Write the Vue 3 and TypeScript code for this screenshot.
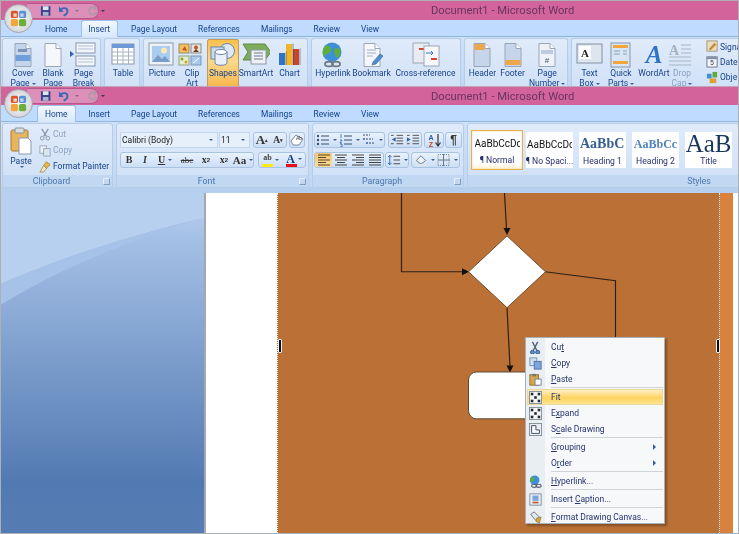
<script setup lang="ts">
interface Big { label: string; second?: string; caret?: boolean; w: number; icon: string; hot?: boolean; dim?: boolean }
interface Group { w: number; pad: number; buttons: Big[] }

const page = (fill: string, extra = '') =>
  `<path d="M6 1.5h11l5 5v18H6z" fill="${fill}" stroke="#9aa6b8"/><path d="M17 1.5v5h5" fill="#fff" stroke="#9aa6b8"/>${extra}`

const icons: Record<string, string> = {
  cover: page('#c3d5ec', '<rect x="9" y="7" width="9" height="3" fill="#7d93b5"/><rect x="6.5" y="13" width="15" height="6" fill="#6f9fd8"/>'),
  blank: page('#f5f7fb'),
  pagebreak: '<rect x="6" y="1" width="19" height="10" fill="#f3f6fb" stroke="#8796ad"/><path d="M8 4h15M8 7h15" stroke="#b4c0d2"/><rect x="6" y="14" width="19" height="10" fill="#f3f6fb" stroke="#8796ad"/><path d="M8 17h15M8 20h15" stroke="#b4c0d2"/><path d="M0 9l4 3-4 3z" fill="#2f5fb0"/>',
  table: '<rect x="3" y="2" width="22" height="20" fill="#fff" stroke="#8a98ac"/><rect x="3" y="2" width="22" height="4" fill="#6b9ad6"/><path d="M3 10h22M3 14h22M3 18h22M8.500 6v16M14 6v16M19.500 6v16" stroke="#a9b5c6"/>',
  picture: '<rect x="1" y="1" width="24" height="22" fill="#eef2f7" stroke="#8d98a8"/><rect x="4" y="4" width="18" height="16" fill="#a9cdf2"/><circle cx="16" cy="8.500" r="3" fill="#ffe9a8"/><path d="M4 20l6-7 4 4 3-3 5 6z" fill="#7a9cc6"/>',
  clipart: '<rect x="1" y="2" width="10" height="9" fill="#f3c05a" stroke="#9a8a70"/><path d="M4 8l3-4 2 5z" fill="#c85a20"/><rect x="13" y="2" width="10" height="9" fill="#e8e3da" stroke="#8a8a8a"/><circle cx="18" cy="5.500" r="2" fill="#b85a2a"/><path d="M15 10l3-3 3 3z" fill="#6a3a2a"/><rect x="1" y="14" width="10" height="9" fill="#e7edc8" stroke="#8fa08a"/><circle cx="4" cy="17" r="1.500" fill="#86a83a"/><circle cx="8" cy="20" r="1.500" fill="#d2a520"/><rect x="13" y="14" width="10" height="9" fill="#a8caec" stroke="#7c98b8"/><path d="M15 21l6-5" stroke="#fff"/>',
  shapes: '<circle cx="18" cy="9" r="7.500" fill="#dce8f6" stroke="#6d84a4"/><rect x="2" y="5" width="13" height="12" fill="#c9daef" stroke="#6d84a4"/><path d="M6 10v11c0 3 12 3 12 0V10z" fill="#e8f0fa" stroke="#6d84a4"/><ellipse cx="12" cy="10" rx="6" ry="2.500" fill="#fff" stroke="#6d84a4"/>',
  smartart: '<path d="M1 2h22l6 8-6 8H1l5-8z" fill="#7dac5c" stroke="#5e8a44"/><rect x="9" y="8" width="15" height="14" fill="#eef2f6" stroke="#8b97a6"/><path d="M12 11h9M12 14h9M12 17h9" stroke="#6c7a8c"/>',
  chart: '<rect x="3" y="11" width="6" height="12" fill="#2f74c0"/><rect x="10" y="2" width="6" height="21" fill="#f0b429"/><rect x="17" y="7" width="6" height="16" fill="#c8442a"/><path d="M9 11l2-2v14H9zM16 2l2-1v22h-2zM23 7l2-1v17h-2z" fill="#00000033"/>',
  hyperlink: '<circle cx="13" cy="10" r="9.500" fill="#3d8fd8"/><path d="M7 3c4 1 6 3 5 6s-6 2-7 6c-2-3-2-8 2-12zM16 6l5 1c1 5-1 8-3 9-2-3-4-6-2-10z" fill="#5fae3c"/><g fill="none" stroke="#6d7784" stroke-width="1.800"><ellipse cx="10" cy="22" rx="4" ry="2.400"/><ellipse cx="17" cy="22" rx="4" ry="2.400"/></g>',
  bookmark: page('#f5f7fb', '<path d="M9 8h9M9 11h9M9 14h6" stroke="#9cb0c8"/><path d="M15 20l7-8 3 2-7 8-4 1z" fill="#4d8fd0" stroke="#2f5f9a" stroke-width=".6"/>'),
  crossref: '<rect x="1" y="1" width="16" height="20" fill="#e9edf3" stroke="#9aa6b8"/><rect x="7" y="6" width="6" height="2" fill="#d8452a"/><rect x="12" y="4" width="15" height="20" fill="#f6f8fb" stroke="#9aa6b8"/><rect x="19" y="16" width="6" height="2" fill="#d8452a"/><path d="M14 11h7l-2-2m2 2-2 2" fill="none" stroke="#2f74c0"/>',
  header: page('#c6d5e9', '<rect x="6.500" y="2" width="10" height="6" fill="#eda64a"/>'),
  footer: page('#c6d5e9', '<rect x="6.500" y="18" width="15" height="5" fill="#eda64a"/>'),
  pagenum: page('#eef2f8', '<rect x="8" y="8" width="12" height="4" fill="#bccbe0"/><text x="14" y="21" font-size="8" text-anchor="middle" fill="#45536a" font-family="Liberation Sans">#</text>'),
  textbox: '<rect x="1" y="2" width="25" height="19" fill="#dde5ef" stroke="#8390a2"/><rect x="3" y="4" width="12" height="13" fill="#fff"/><text x="9" y="15" font-size="11" font-weight="700" text-anchor="middle" fill="#222" font-family="Liberation Serif">A</text>',
  quick: '<rect x="4" y="1" width="19" height="24" fill="#d8e5f5" stroke="#8595ab"/><rect x="6" y="3" width="15" height="3" fill="#f2a53a"/><path d="M7 9h6M7 12h6M16 9h4M16 12h4" stroke="#8aa0bc"/><rect x="6" y="19" width="15" height="3" fill="#f2a53a"/>',
  wordart: '<text x="14" y="21" font-size="25" font-style="italic" font-weight="700" text-anchor="middle" fill="#2e73c4" font-family="Liberation Serif">A</text>',
  dropcap: '<text x="6" y="13" font-size="14" font-weight="700" text-anchor="middle" fill="#a8b0bc" font-family="Liberation Serif">A</text><path d="M13 3h10M13 7h10M13 11h10M1 15h22M1 19h22M1 23h22" stroke="#a8b4c4"/>',
  save: '<rect x="1" y="1" width="10" height="10" fill="#3b3f8c"/><rect x="3" y="1" width="6" height="4" fill="#dfe6f3"/><rect x="3" y="7" width="6" height="4" fill="#a9b5d0"/>',
  undo: '<path d="M2 6c2-4 8-4 8 0s-3 4-4 5" fill="none" stroke="#3d68b5" stroke-width="2"/><path d="M1 1v6h5z" fill="#3d68b5"/>',
  redo: '<path d="M9 3a4 4 0 1 0 1 4" fill="none" stroke="#b098a8" stroke-width="2"/><path d="M10 0v5H6z" fill="#b098a8"/>',
  cut: '<path d="M3 1l5 8M10 1L5 9" stroke="#8a96a6" stroke-width="1.300"/><circle cx="3.500" cy="11" r="2" fill="none" stroke="#8a96a6"/><circle cx="9.500" cy="11" r="2" fill="none" stroke="#8a96a6"/>',
  copy: '<rect x="1" y="2" width="7" height="8" fill="#eef3f9" stroke="#97a6ba"/><rect x="5" y="5" width="7" height="8" fill="#dbe6f3" stroke="#97a6ba"/>',
  painter: '<path d="M8 2l4 3-4 4-3-3z" fill="#e8b640" stroke="#8f7330" stroke-width=".7"/><path d="M5 6l3 3-3 4-4 0z" fill="#f5e7bf" stroke="#8f7330" stroke-width=".7"/>',
  paste: '<rect x="1" y="3" width="17" height="21" rx="1.500" fill="#e8b45c" stroke="#a47b35"/><rect x="5" y="1" width="9" height="5" rx="1" fill="#d8dde4" stroke="#88929e"/><path d="M9 11h9l3 3v13H9z" fill="#fff" stroke="#8e9aaa"/>',
  list: '<g fill="#38506e"><circle cx="2" cy="3" r="1.200"/><circle cx="2" cy="7" r="1.200"/><circle cx="2" cy="11" r="1.200"/></g><path d="M5 3h8M5 7h8M5 11h8" stroke="#38506e"/>',
  numlist: '<path d="M2 1v4M1 7h2l-2 3h2M1 11h2v3H1" stroke="#2f62ad" fill="none" stroke-width=".8"/><path d="M5 3h8M5 7h8M5 11h8" stroke="#38506e"/>',
  multilist: '<path d="M1 2h7M4 6h7M7 10h6" stroke="#38506e" stroke-dasharray="2 1"/><circle cx="2" cy="6" r="1" fill="#2f62ad"/><circle cx="5" cy="10" r="1" fill="#2f62ad"/>',
  outdent: '<path d="M7 2h7M7 5h7M7 8h7M7 11h7M1 2h3M1 11h3" stroke="#4a4a4a"/><path d="M6 4v5L2 6.500z" fill="#355f9e"/>',
  indent: '<path d="M7 2h7M7 5h7M7 8h7M7 11h7M1 2h3M1 11h3" stroke="#4a4a4a"/><path d="M1 4v5l4-2.500z" fill="#355f9e"/>',
  sort: '<text x="4" y="7" font-size="7" font-weight="700" text-anchor="middle" fill="#355f9e" font-family="Liberation Sans">A</text><text x="4" y="14" font-size="7" font-weight="700" text-anchor="middle" fill="#c8442a" font-family="Liberation Sans">Z</text><path d="M11 1v11M8.500 9.500L11 13l2.500-3.500" fill="none" stroke="#333" stroke-width="1.200"/>',
  alignl: '<path d="M1 2h12M1 4.500h8M1 7h12M1 9.500h8M1 12h12" stroke="#5c4526" stroke-width="1.200"/>',
  alignc: '<path d="M1 2h12M3 4.500h8M1 7h12M3 9.500h8M1 12h12" stroke="#444" stroke-width="1.200"/>',
  alignr: '<path d="M1 2h12M5 4.500h8M1 7h12M5 9.500h8M1 12h12" stroke="#444" stroke-width="1.200"/>',
  alignj: '<path d="M1 2h12M1 4.500h12M1 7h12M1 9.500h12M1 12h12" stroke="#444" stroke-width="1.200"/>',
  spacing: '<path d="M3 2v10M1 4l2-2 2 2M1 10l2 2 2-2" fill="none" stroke="#2f62ad"/><path d="M7 3h7M7 7h7M7 11h7" stroke="#444"/>',
  shade: '<path d="M2 8l5-5 5 5-5 4z" fill="#eef2f7" stroke="#6a7686"/><rect x="1" y="12" width="12" height="2" fill="#dfe6ef"/>',
  borders: '<rect x="1" y="1.500" width="11" height="11" fill="none" stroke="#7a8796" stroke-dasharray="1 1"/><path d="M6.500 1v12M1 7h12" stroke="#6e7a8a"/>',
  clear: '<path d="M1 8l5-6 7 4-4 6-6 0z" fill="#fff" stroke="#7f8b9a"/><text x="6" y="7" font-size="5" fill="#333" font-family="Liberation Sans">Ab</text>',
  signature: '<rect x="1" y="1" width="11" height="11" fill="#e8dcc2" stroke="#a49474"/><path d="M3 10l6-7 2 2-6 6z" fill="#c58a32"/>',
  date: '<rect x="1" y="2" width="11" height="11" fill="#f2f5f9" stroke="#6c7888"/><text x="6.500" y="11" font-size="7" text-anchor="middle" fill="#334" font-family="Liberation Sans">5</text><rect x="1" y="2" width="11" height="2.500" fill="#7f93ad"/>',
  object: '<rect x="1" y="3" width="5" height="5" fill="#3f8fd0"/><rect x="7" y="1" width="5" height="6" fill="#5fa844"/><rect x="4" y="8" width="7" height="5" fill="#e0a030"/>',
  mcut: '<path d="M4 1l5 10M10 1L5 11" stroke="#4a5e7a" stroke-width="1.500"/><circle cx="4" cy="13" r="2.300" fill="#5a8fd0" stroke="#2e4f80"/><circle cx="10" cy="13" r="2.300" fill="#5a8fd0" stroke="#2e4f80"/>',
  mcopy: '<rect x="1" y="1" width="8" height="9" fill="#cfe0f5" stroke="#6f8bb0"/><rect x="6" y="5" width="8" height="9" fill="#7ba6dc" stroke="#4d6f9f"/>',
  mpaste: '<rect x="1" y="2" width="10" height="12" fill="#d8a84c" stroke="#8a6a2a"/><rect x="4" y="1" width="4" height="3" fill="#777"/><rect x="7" y="7" width="7" height="7" fill="#fff" stroke="#6f7b8b"/>',
  mfit: '<rect x=".500" y=".500" width="14" height="14" fill="#f3f5f8" stroke="#7b8797"/><g fill="#262b33"><rect x="2" y="2" width="3" height="3"/><rect x="10" y="2" width="3" height="3"/><rect x="2" y="10" width="3" height="3"/><rect x="10" y="10" width="3" height="3"/><rect x="6" y="6" width="3" height="3"/></g>',
  mscale: '<rect x=".500" y=".500" width="14" height="14" fill="#e8edf4" stroke="#7b8797"/><path d="M3 11V3h5v5h4v4H3z" fill="#f9fbfd" stroke="#2e3a4c"/>',
  mhyper: '<circle cx="6.500" cy="6" r="5.500" fill="#3d8fd8"/><path d="M3 2c3 1 4 3 2 5L2 8C1 6 1 4 3 2z" fill="#5fae3c"/><g fill="none" stroke="#59636f" stroke-width="1.300"><ellipse cx="6" cy="12.500" rx="3" ry="1.800"/><ellipse cx="11" cy="12.500" rx="3" ry="1.800"/></g>',
  mcaption: '<rect x="1" y="1" width="13" height="13" fill="#e9eef5" stroke="#7b8797"/><rect x="4" y="3" width="7" height="6" fill="#7ba6dc"/><rect x="4" y="10" width="7" height="2" fill="#c0603a"/>',
  mformat: '<path d="M2 4l4-3 6 6-4 4z" fill="#dfe6ef" stroke="#5e6c80"/><path d="M9 8l5-1-2 7-4-2z" fill="#d9a733" stroke="#7f6420" stroke-width=".6"/>',
}

const ribbons = [{ cls: 'first', active: 'Insert' }, { cls: 'second', active: 'Home' }]
const tabs = ['Home', 'Insert', 'Page Layout', 'References', 'Mailings', 'Review', 'View']

const insertGroups: Group[] = [
  { w: 99, pad: 5, buttons: [
    { label: 'Cover', second: 'Page', caret: true, w: 30, icon: 'cover' },
    { label: 'Blank', second: 'Page', w: 30, icon: 'blank' },
    { label: 'Page', second: 'Break', w: 31, icon: 'pagebreak' },
  ] },
  { w: 36, pad: 2, buttons: [{ label: 'Table', caret: true, w: 32, icon: 'table' }] },
  { w: 165, pad: 3, buttons: [
    { label: 'Picture', w: 30, icon: 'picture' },
    { label: 'Clip', second: 'Art', w: 30, icon: 'clipart' },
    { label: 'Shapes', caret: true, w: 32, icon: 'shapes', hot: true },
    { label: 'SmartArt', w: 34, icon: 'smartart' },
    { label: 'Chart', w: 33, icon: 'chart' },
  ] },
  { w: 150, pad: 2, buttons: [
    { label: 'Hyperlink', w: 38, icon: 'hyperlink' },
    { label: 'Bookmark', w: 39, icon: 'bookmark' },
    { label: 'Cross-reference', w: 69, icon: 'crossref' },
  ] },
  { w: 104, pad: 2, buttons: [
    { label: 'Header', caret: true, w: 31, icon: 'header' },
    { label: 'Footer', caret: true, w: 30, icon: 'footer' },
    { label: 'Page', second: 'Number', caret: true, w: 40, icon: 'pagenum' },
  ] },
]
const textButtons: Big[] = [
  { label: 'Text', second: 'Box', caret: true, w: 31, icon: 'textbox' },
  { label: 'Quick', second: 'Parts', caret: true, w: 32, icon: 'quick' },
  { label: 'WordArt', caret: true, w: 34, icon: 'wordart' },
  { label: 'Drop', second: 'Cap', caret: true, w: 22, icon: 'dropcap', dim: true },
]
const textSmall = [
  { label: 'Signa', icon: 'signature' },
  { label: 'Date', icon: 'date' },
  { label: 'Obje', icon: 'object' },
]
const clipboardSmall = [
  { label: 'Cut', icon: 'cut', off: true },
  { label: 'Copy', icon: 'copy', off: true },
  { label: 'Format Painter', icon: 'painter', off: false },
]
const fontSeg = [
  { t: 'B', c: 'g-b', w: 16 }, { t: 'I', c: 'g-i', w: 16 }, { t: 'U', c: 'g-u', w: 24, caret: true },
  { t: 'abc', c: 'g-s', w: 20 }, { t: 'x', sub: '2', c: 'g-x', w: 18 }, { t: 'x', sup: '2', c: 'g-x', w: 18 },
  { t: 'Aa', c: 'g-a', w: 20, caret: true },
]
const styles = [
  { sample: 'AaBbCcDc', label: '¶ Normal', cls: 's-normal', on: true },
  { sample: 'AaBbCcDc', label: '¶ No Spaci...', cls: 's-normal', on: false },
  { sample: 'AaBbC', label: 'Heading 1', cls: 's-h1', on: false },
  { sample: 'AaBbCc', label: 'Heading 2', cls: 's-h2', on: false },
  { sample: 'AaB', label: 'Title', cls: 's-title', on: false },
]
const menu = [
  { pre: 'Cu', u: 't', post: '', icon: 'mcut' },
  { pre: '', u: 'C', post: 'opy', icon: 'mcopy' },
  { pre: '', u: 'P', post: 'aste', icon: 'mpaste', sep: true },
  { pre: 'Fit', u: '', post: '', icon: 'mfit', hot: true },
  { pre: 'E', u: 'x', post: 'pand', icon: 'mfit' },
  { pre: 'S', u: 'c', post: 'ale Drawing', icon: 'mscale', sep: true },
  { pre: '', u: 'G', post: 'rouping', sub: true },
  { pre: 'O', u: 'r', post: 'der', sub: true, sep: true },
  { pre: '', u: 'H', post: 'yperlink...', icon: 'mhyper', sep: true },
  { pre: 'Insert ', u: 'C', post: 'aption...', icon: 'mcaption', sep: true },
  { pre: '', u: 'F', post: 'ormat Drawing Canvas...', icon: 'mformat' },
]
</script>

<template>
  <div class="app">
    <header v-for="r in ribbons" :key="r.cls" class="ribbon" :class="r.cls">
      <div class="titlebar">
        <div class="qat-zone">
          <div class="qat">
            <svg class="qi" viewBox="0 0 12 12" v-html="icons.save"></svg>
            <svg class="qi undo" viewBox="0 0 12 12" v-html="icons.undo"></svg>
            <i class="caret qc"></i>
            <svg class="qi" viewBox="0 0 12 12" v-html="icons.redo"></svg>
          </div>
          <i class="caret qmore"></i>
        </div>
        <div class="doc-title">Document1 - Microsoft Word</div>
      </div>
      <nav class="tabs">
        <span v-for="t in tabs" :key="t" class="tab" :class="{ active: t === r.active }">{{ t }}</span>
      </nav>
      <div class="orb">
        <svg viewBox="0 0 20 20">
          <rect x="1" y="1" width="8.500" height="8.500" rx="2" fill="#d9552c"/>
          <rect x="10.500" y="1" width="8.500" height="8.500" rx="2" fill="#5b8fd6"/>
          <rect x="1" y="10.500" width="8.500" height="8.500" rx="2" fill="#efa63a"/>
          <rect x="10.500" y="10.500" width="8.500" height="8.500" rx="2" fill="#6cae3e"/>
          <rect x="4" y="4" width="4" height="4" fill="#fff" opacity=".7"/>
          <rect x="12" y="4" width="4" height="4" fill="#fff" opacity=".6"/>
        </svg>
      </div>

      <div v-if="r.cls === 'first'" class="body body-insert">
        <section v-for="(g, i) in insertGroups" :key="i" class="group short" :style="{ width: g.w + 'px', paddingLeft: g.pad + 'px' }">
          <button v-for="b in g.buttons" :key="b.label" class="big" :class="{ hot: b.hot, dim: b.dim }" :style="{ width: b.w + 'px' }">
            <svg class="big-icon" viewBox="0 0 28 26" v-html="icons[b.icon]"></svg>
            <span class="big-l">{{ b.label }}</span>
            <span class="big-l">{{ b.second }}<i v-if="b.caret && b.second" class="caret"></i></span>
            <i v-if="b.caret && !b.second" class="caret lone"></i>
          </button>
        </section>
        <section class="group short grow">
          <button v-for="b in textButtons" :key="b.label" class="big" :class="{ dim: b.dim }" :style="{ width: b.w + 'px' }">
            <svg class="big-icon" viewBox="0 0 28 26" v-html="icons[b.icon]"></svg>
            <span class="big-l">{{ b.label }}</span>
            <span class="big-l">{{ b.second }}<i v-if="b.caret && b.second" class="caret"></i></span>
            <i v-if="b.caret && !b.second" class="caret lone"></i>
          </button>
          <div class="small-list text-small">
            <div v-for="s in textSmall" :key="s.label" class="small">
              <svg class="si" viewBox="0 0 14 14" v-html="icons[s.icon]"></svg>{{ s.label }}
            </div>
          </div>
        </section>
      </div>

      <div v-else class="body body-home">
        <section class="group tall clipboard">
          <div class="g-main">
            <div class="paste">
              <svg class="paste-i" viewBox="0 0 22 28" v-html="icons.paste"></svg>
              <span>Paste</span>
              <i class="caret"></i>
            </div>
            <div class="small-list">
              <div v-for="s in clipboardSmall" :key="s.label" class="small" :class="{ off: s.off }">
                <svg class="si" viewBox="0 0 14 14" v-html="icons[s.icon]"></svg>{{ s.label }}
              </div>
            </div>
          </div>
          <footer class="g-label">Clipboard<i class="launch"></i></footer>
        </section>

        <section class="group tall font">
          <div class="g-main rows">
            <div class="row">
              <div class="combo c-font">Calibri (Body)<i class="caret"></i></div>
              <div class="combo c-size">11<i class="caret"></i></div>
              <div class="seg m3">
                <span class="cell w16 bigA">A<sup>▴</sup></span>
                <span class="cell w16 smallA">A<sup>▾</sup></span>
              </div>
              <div class="seg m2"><svg class="cell-i" viewBox="0 0 14 14" v-html="icons.clear"></svg></div>
            </div>
            <div class="row">
              <div class="seg">
                <span v-for="(c, i) in fontSeg" :key="i" class="cell" :class="c.c" :style="{ width: c.w + 'px' }">{{ c.t }}<sub v-if="c.sub">{{ c.sub }}</sub><sup v-if="c.sup">{{ c.sup }}</sup><i v-if="c.caret" class="caret"></i></span>
              </div>
              <div class="seg m4 colors">
                <span class="cell w24 hl"><em>ab</em><b class="bar yellow"></b><i class="caret"></i></span>
                <span class="cell w22 fc">A<b class="bar red"></b><i class="caret"></i></span>
              </div>
            </div>
          </div>
          <footer class="g-label">Font<i class="launch"></i></footer>
        </section>

        <section class="group tall para">
          <div class="g-main rows">
            <div class="row">
              <div class="seg">
                <span class="cell w23"><svg class="cell-i" viewBox="0 0 14 14" v-html="icons.list"></svg><i class="caret"></i></span>
                <span class="cell w23"><svg class="cell-i" viewBox="0 0 14 14" v-html="icons.numlist"></svg><i class="caret"></i></span>
                <span class="cell w23"><svg class="cell-i" viewBox="0 0 14 14" v-html="icons.multilist"></svg><i class="caret"></i></span>
              </div>
              <div class="seg m3">
                <span class="cell w16"><svg class="cell-i" viewBox="0 0 15 14" v-html="icons.outdent"></svg></span>
                <span class="cell w16"><svg class="cell-i" viewBox="0 0 15 14" v-html="icons.indent"></svg></span>
              </div>
              <div class="seg m2"><span class="cell w18"><svg class="cell-i" viewBox="0 0 14 14" v-html="icons.sort"></svg></span></div>
              <div class="seg m1"><span class="cell w15 pil">¶</span></div>
            </div>
            <div class="row">
              <div class="seg">
                <span class="cell w17 on"><svg class="cell-i" viewBox="0 0 14 14" v-html="icons.alignl"></svg></span>
                <span class="cell w17"><svg class="cell-i" viewBox="0 0 14 14" v-html="icons.alignc"></svg></span>
                <span class="cell w17"><svg class="cell-i" viewBox="0 0 14 14" v-html="icons.alignr"></svg></span>
                <span class="cell w17"><svg class="cell-i" viewBox="0 0 14 14" v-html="icons.alignj"></svg></span>
              </div>
              <div class="seg m1"><span class="cell w22"><svg class="cell-i" viewBox="0 0 15 14" v-html="icons.spacing"></svg><i class="caret"></i></span></div>
              <div class="seg m2">
                <span class="cell w24"><svg class="cell-i" viewBox="0 0 14 15" v-html="icons.shade"></svg><i class="caret"></i></span>
                <span class="cell w23"><svg class="cell-i" viewBox="0 0 14 14" v-html="icons.borders"></svg><i class="caret"></i></span>
              </div>
            </div>
          </div>
          <footer class="g-label">Paragraph<i class="launch"></i></footer>
        </section>

        <section class="group tall stylesg">
          <div class="g-main cards">
            <div v-for="s in styles" :key="s.label" class="card" :class="{ on: s.on }">
              <div class="sample" :class="s.cls">{{ s.sample }}</div>
              <div class="s-label">{{ s.label }}</div>
            </div>
          </div>
          <footer class="g-label styles-l">Styles</footer>
        </section>
      </div>
    </header>

    <main class="workspace">
      <aside class="backdrop">
        <svg class="swoosh" viewBox="0 0 204 341" preserveAspectRatio="none">
          <defs>
            <linearGradient id="wsg" x1="0" y1="0" x2="0" y2="1">
              <stop offset="0" stop-color="#bcd3f0"/>
              <stop offset=".13" stop-color="#a5c0e6"/>
              <stop offset=".85" stop-color="#527ab2"/>
              <stop offset="1" stop-color="#557cb3"/>
            </linearGradient>
          </defs>
          <rect width="204" height="341" fill="url(#wsg)"/>
          <path d="M0 0h204v25C130 42 60 65 0 91z" fill="#b8d0ef"/>
          <path d="M0 91C60 65 130 42 204 25C130 47 60 75 0 112z" fill="#a6c2e8"/>
        </svg>
      </aside>
      <div class="sheet">
        <div class="margin"></div>
        <div class="canvas">
          <svg class="flow" viewBox="278 193 441 341" preserveAspectRatio="none">
            <g fill="none" stroke="#2e2114" stroke-width="1.200">
              <path d="M401.500 193v79H463"/>
              <path d="M504.500 193L506.500 229"/>
              <path d="M507 308L510 367"/>
              <path d="M545 272L615.500 281V345"/>
            </g>
            <g fill="#111">
              <path d="M469 272l-7-3.500v7z"/>
              <path d="M507 235l-3.500-7h7z"/>
              <path d="M510 373l-3.500-7h7z"/>
            </g>
            <path d="M507 236L545.500 272L507 308L468.500 272z" fill="#fff" stroke="#6d4a2a"/>
            <rect x="468.500" y="372.500" width="90" height="47" rx="8" fill="#fff" stroke="#5b4632"/>
          </svg>
          <i class="handle h-left"></i>
          <i class="handle h-right"></i>
        </div>
        <div class="strip"></div>
      </div>
    </main>

    <ul class="ctx">
      <template v-for="(m, i) in menu" :key="i">
        <li class="item" :class="{ hot: m.hot }">
          <span class="gut"><svg v-if="m.icon" class="mi" viewBox="0 0 15 15" v-html="icons[m.icon]"></svg></span>
          <span class="txt">{{ m.pre }}<u v-if="m.u">{{ m.u }}</u>{{ m.post }}</span>
          <i v-if="m.sub" class="arrow"></i>
        </li>
        <li v-if="m.sep" class="sep"></li>
      </template>
    </ul>
  </div>
</template>

<style scoped>
.app {
  position: relative; width: 739px; height: 534px; overflow: hidden;
  display: flex; flex-direction: column; box-sizing: border-box;
  border: 1px solid #adb0b4; background: #fff;
  font-family: Roboto, "Liberation Sans", Arial, sans-serif; font-size: 8.5px; color: #15428b;
  filter: blur(.3px);
}
.ribbon { position: relative; flex: none; overflow: hidden; background: #bfdbff; }
.ribbon.first { height: 85px; }
.ribbon.second { height: 107px; }
.ribbon.second .titlebar { border-top: 1px solid #c2a6b8; height: 18px; }

.titlebar { display: flex; align-items: center; height: 19px; background: #d2639b; }
.qat-zone { width: 430px; flex: none; display: flex; align-items: center; padding-left: 26px; box-sizing: border-box; }
.qat {
  width: 72px; height: 16px; display: flex; align-items: center; gap: 3px; padding-left: 13px; box-sizing: border-box;
  background: #dc8fb8; border: 1px solid #b9578a; border-left: 0; border-radius: 0 9px 9px 0;
}
.qi { width: 12px; height: 12px; }
.qi.undo { margin-left: 4px; }
.qc { border-top-color: #8b6a8a !important; margin: 0 5px 0 0; }
.qmore { margin-left: 8px; border-top-color: #3b3552 !important; }
.doc-title { font-family: Roboto, sans-serif; font-size: 11.2px; color: #6a3560; }

.tabs { height: 17px; display: flex; gap: 5px; padding-left: 36px; align-items: stretch; background: #bfdbff; border-bottom: 1px solid #8fb4df; box-sizing: border-box; }
.tab { padding: 2px 8px 0; line-height: 14px; color: #15428b; white-space: nowrap; font-size: 8.4px; }
.tab.active {
  background: linear-gradient(#f2f8ff, #d8e8fb); border: 1px solid #9ebfe6; border-bottom: 0;
  border-radius: 3px 3px 0 0; padding: 1px 7px 0; height: 17px; box-sizing: border-box;
}
.orb {
  position: absolute; left: 3px; top: 3px; width: 27px; height: 27px; border-radius: 50%;
  background: radial-gradient(#fff, #d5d7dc 70%, #9ea3ab); border: 1px solid #a7a6ad;
  display: flex; align-items: center; justify-content: center;
}
.second .orb { top: 3px; }
.orb svg { width: 17px; height: 17px; }

.body { display: flex; gap: 3px; padding: 1px 0 0 1px; background: linear-gradient(#cfe1f7, #c1d7f2); }
.body-insert { height: 48px; }
.body-home { height: 70px; background: linear-gradient(#cfe1f7 0, #c1d7f2 92%, #b6cfee 92%); }
.group {
  box-sizing: border-box; flex: none; border: 1px solid #b5cde9; border-radius: 3px;
  background: linear-gradient(#e0ebfa, #cddff6);
}
.group.short { display: flex; height: 60px; border-bottom: 0; }
.group.grow { flex: 1; padding-left: 2px; margin-right: 2px; }

.big {
  all: unset; box-sizing: border-box; display: flex; flex-direction: column; align-items: center;
  height: 50px; padding-top: 3px; line-height: 10px; font-size: 8.5px; color: #15428b; white-space: nowrap;
}
.big.hot { background: linear-gradient(#f9c04d, #fad98c 45%, #f7b44a); border: 1px solid #c29b5e; border-radius: 2px; padding-top: 2px; }
.big.dim { color: #8aa2c4; }
.big-icon { width: 28px; height: 26px; flex: none; margin-bottom: 0; }
.big-l { height: 10px; display: block; }
.caret {
  display: inline-block; width: 0; height: 0; margin-left: 2px; vertical-align: 1px;
  border-left: 2px solid transparent; border-right: 2px solid transparent; border-top: 2.500px solid #3e5f92;
}
.caret.lone { margin: 3px 0 0; }

.small-list { display: flex; flex-direction: column; }
.small { display: flex; align-items: center; gap: 1px; height: 16px; white-space: nowrap; }
.small.off { color: #8fa3bf; }
.si { width: 13px; height: 13px; flex: none; }
.text-small { margin-left: 13px; height: 46px; overflow: hidden; }

.group.tall { display: flex; flex-direction: column; height: 65px; }
.g-main { flex: 1; min-height: 0; display: flex; }
.g-label {
  position: relative; height: 12px; line-height: 12px; text-align: center; color: #4b76ad; font-size: 8.8px;
  padding-right: 12px; box-sizing: border-box;
  background: #c1d8f3; border-radius: 0 0 3px 3px;
}
.launch {
  position: absolute; right: 2px; top: 3px; width: 5px; height: 5px;
  border: 1px solid #7f9bc0; border-radius: 1px; border-left-color: #e6eef9; border-top-color: #e6eef9;
}
.clipboard { width: 111px; }
.paste { width: 36px; flex: none; display: flex; flex-direction: column; align-items: center; padding-top: 3px; line-height: 10px; }
.paste-i { width: 22px; height: 28px; margin-bottom: 1px; }
.clipboard .small-list { padding-top: 2px; }
.font { width: 193px; }
.para { width: 152px; }
.para .rows { padding-left: 1px; }
.stylesg { flex: 1 !important; margin-right: 2px; }
.rows { flex-direction: column; gap: 4px; padding: 8px 0 0 3px; }
.row { display: flex; align-items: stretch; height: 16px; }
.combo {
  box-sizing: border-box; display: flex; align-items: center; justify-content: space-between; height: 16px;
  padding: 0 4px 0 1px; background: #e6f0fb; border: 1px solid #c2d6ee; color: #222; font-size: 8.5px;
}
.c-font { width: 98px; }
.c-size { width: 31px; margin-left: 1px; }
.seg {
  box-sizing: border-box; display: flex; align-items: center; justify-content: center; height: 16px;
  border: 1px solid #a9c3e3; border-radius: 3px; background: linear-gradient(#e9f2fd, #cbdef5);
}
.m1 { margin-left: 1px; } .m2 { margin-left: 2px; } .m3 { margin-left: 3px; } .m4 { margin-left: 4px; }
.cell {
  box-sizing: border-box; height: 14px; display: flex; align-items: center; justify-content: center;
  color: #333; font-family: "Liberation Serif", serif; font-size: 11px; line-height: 14px; flex: none;
}
.cell sub, .cell sup { font-size: 6px; line-height: 6px; font-family: "Liberation Sans", sans-serif; }
.cell .caret { margin-left: 3px; flex: none; }
.cell-i { width: 14px; height: 14px; flex: none; }
.w15 { width: 15px; } .w16 { width: 16px; } .w17 { width: 17px; } .w18 { width: 18px; } .w22 { width: 22px; } .w23 { width: 23px; } .w24 { width: 24px; }
.bigA { font-size: 13px; font-weight: 700; } .smallA { font-size: 10px; font-weight: 700; }
.bigA sup, .smallA sup { font-size: 5px; }
.g-b { font-weight: 700; font-size: 10px; } .g-i { font-style: italic; font-weight: 700; font-size: 10px; }
.g-u { text-decoration: underline; font-weight: 700; font-size: 10px; }
.g-s { text-decoration: line-through; font-size: 9px; } .g-x { font-weight: 700; font-size: 10px; }
.g-a { font-size: 11px; font-weight: 700; }
.cell.on { background: linear-gradient(#f6c66b, #f9dd9a); border-radius: 2px; }
.pil { font-weight: 700; font-size: 12px; font-family: "Liberation Sans", sans-serif; }
.colors .cell { position: relative; }
.hl em { font-style: normal; font-size: 8px; font-weight: 700; color: #444; margin-top: -4px; }
.fc { font-weight: 700; color: #15428b; margin-top: 0; padding-bottom: 2px; font-size: 12px; }
.bar { position: absolute; left: 3px; bottom: 0; width: 11px; height: 3px; }
.yellow { background: #ffe814; } .red { background: #e8101c; }
.cards { gap: 0; padding: 6px 0 0 3px; }
.card {
  box-sizing: border-box; width: 47px; height: 36px; margin: 2px 6px 0 0; background: #fff;
  display: flex; flex-direction: column; align-items: center; overflow: hidden; flex: none;
}
.card.on {
  width: 52px; height: 40px; margin: 0 3px 0 0; border: 1.500px solid #e9b04f;
  background: linear-gradient(#fff, #fff 85%, #fff3d4); box-shadow: inset 0 0 2px #f4cf83;
}
.sample { height: 24px; flex: none; display: flex; align-items: center; justify-content: center; white-space: nowrap; color: #111; overflow: hidden; width: 45px; }
.s-normal { font-size: 10px; justify-content: flex-start; }
.s-h1 { font-family: "Liberation Serif", serif; font-size: 14px; font-weight: 700; color: #365f91; justify-content: flex-start; }
.s-h2 { font-family: "Liberation Serif", serif; font-size: 12px; font-weight: 700; color: #4f81bd; }
.s-title { font-family: "Liberation Serif", serif; font-size: 25px; color: #17365d; }
.s-label { font-size: 8.6px; color: #24306e; line-height: 10px; white-space: nowrap; }
.styles-l { padding-left: 192px; padding-right: 0; text-align: center; }

.workspace { flex: 1; min-height: 0; display: flex; }
.backdrop { width: 203px; flex: none; }
.swoosh { display: block; width: 100%; height: 100%; }
.sheet { flex: 1; display: flex; background: #fff; border-left: 2px solid #a4a8ae; }
.margin { width: 71px; flex: none; background: #fff; }
.canvas { position: relative; flex: none; width: 441px; background: #bb7136; border-left: 1px dotted #f2f2f2; border-right: 1px dotted #f2f2f2; }
.flow { display: block; width: 100%; height: 100%; }
.strip { width: 13px; flex: none; background: #d9813f; }
.handle { position: absolute; top: 146px; width: 2px; height: 12px; background: #0b0d18; border: 1px solid #eef0f4; border-radius: 1px; }
.h-left { left: 0; }
.h-right { right: -1px; }

.ctx {
  position: absolute; left: 524px; top: 336px; width: 140px; height: 187px; margin: 0; padding: 1px 0 0; list-style: none;
  box-sizing: border-box; background: linear-gradient(90deg, #e9eef3 0, #e9eef3 19px, #f7f8fa 19px); border: 1px solid #a9b0b8;
  box-shadow: 2px 2px 2px rgba(60, 40, 20, .45); color: #26346f; font-size: 8.5px;
}
.item { position: relative; display: flex; align-items: center; height: 16px; }
.item.hot { background: linear-gradient(#fff3cf, #ffd35f 55%, #ffe79c); box-shadow: 0 0 0 1px #ead79e inset; margin: 0 1px; }
.hot .gut { margin-left: -1px; }
.gut { width: 25px; flex: none; display: flex; justify-content: center; padding-right: 6px; box-sizing: border-box; }
.mi { width: 13px; height: 13px; display: block; }
.txt { white-space: nowrap; }
.arrow { position: absolute; right: 8px; top: 5px; border-left: 3px solid #3a5f98; border-top: 3px solid transparent; border-bottom: 3px solid transparent; }
.sep { height: 1px; margin: 0 1px 1px 25px; background: #d0d4d9; }
</style>
